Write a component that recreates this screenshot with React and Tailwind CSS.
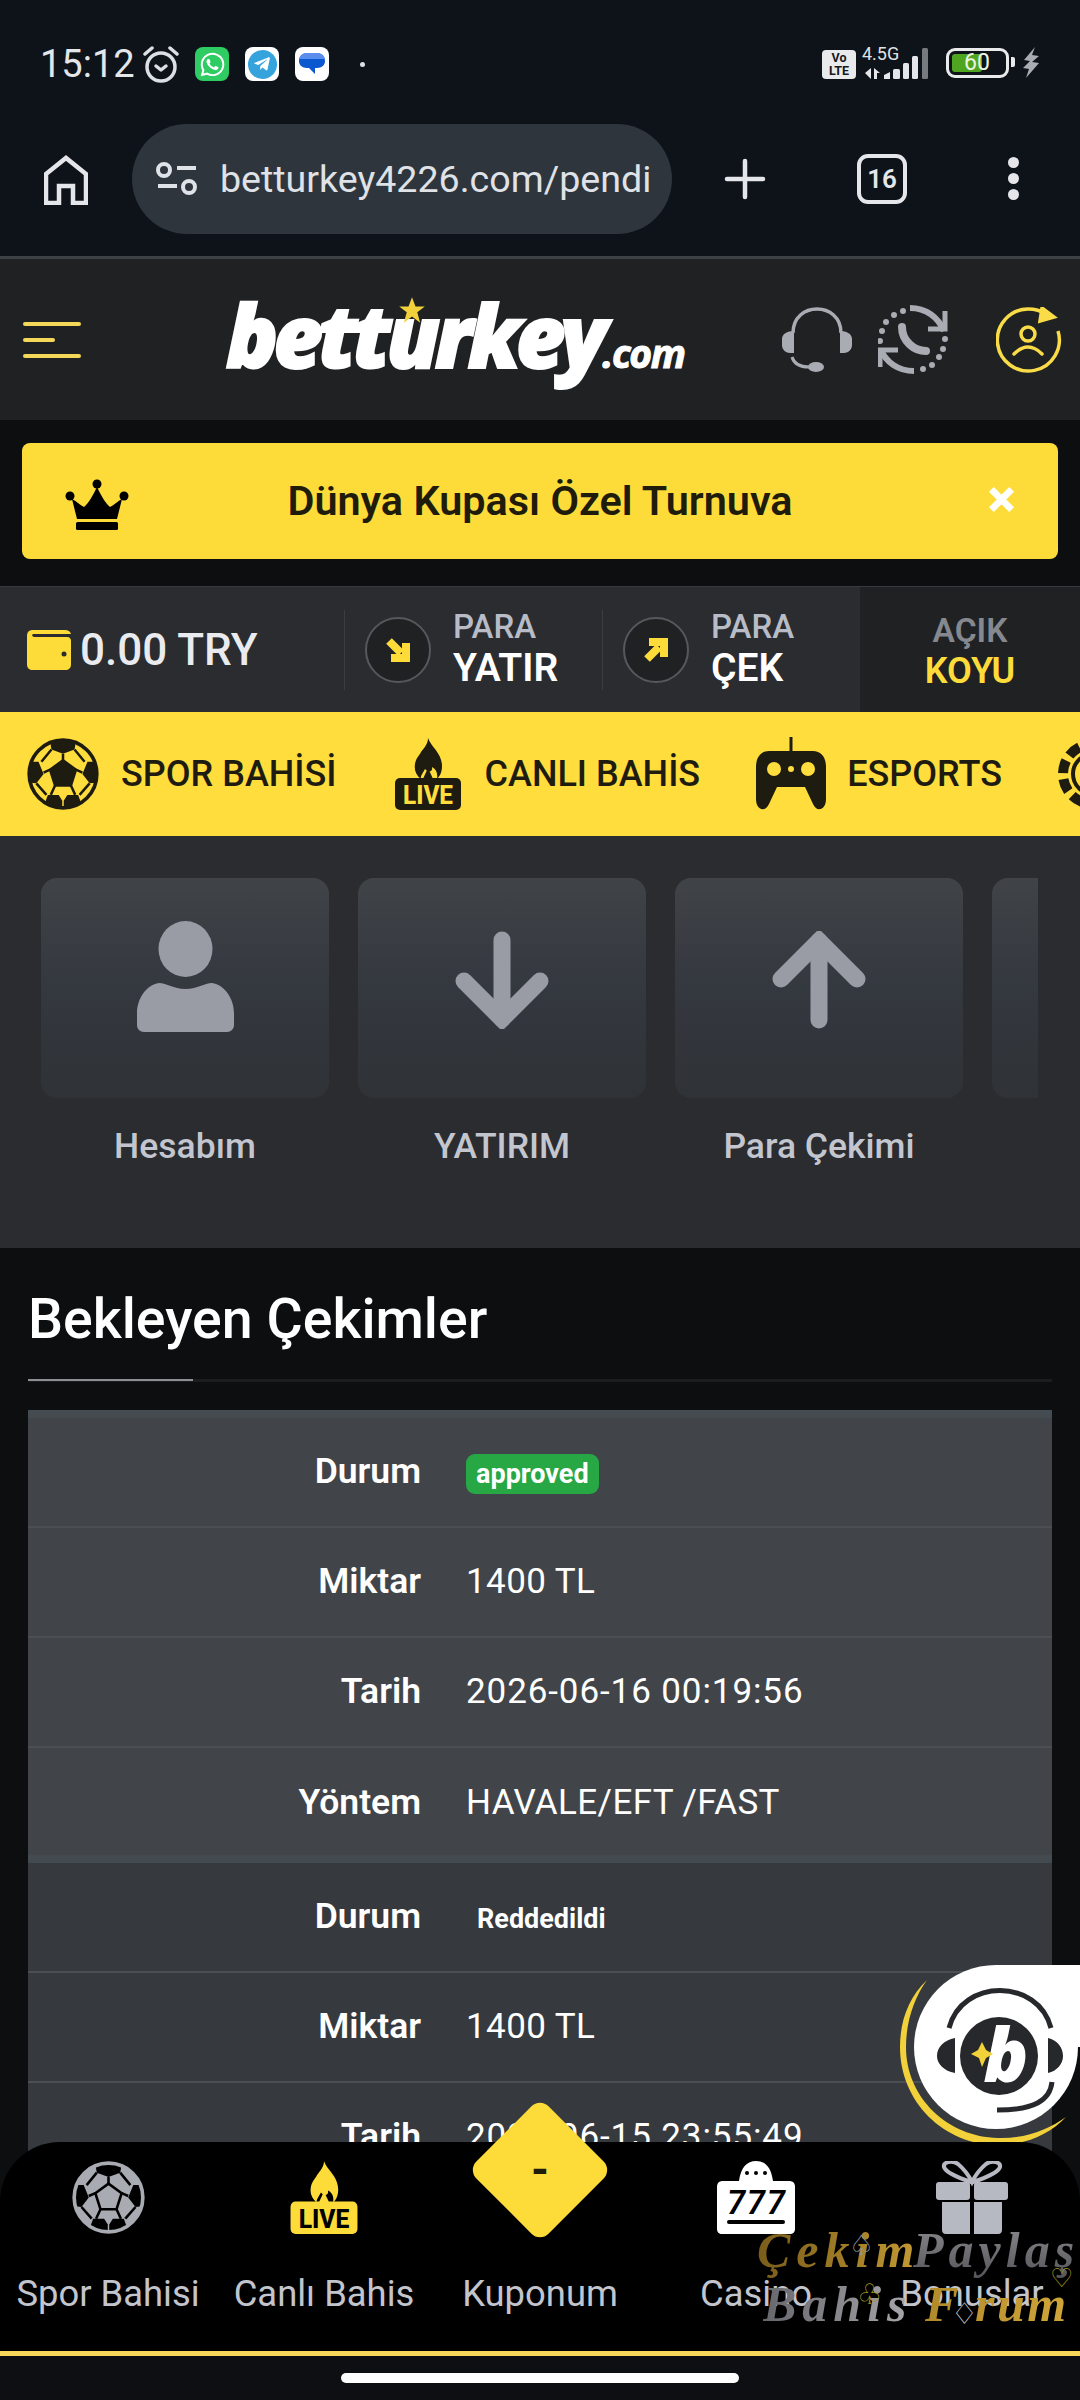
import React from "react";
import { FaWhatsapp, FaTelegramPlane } from "react-icons/fa";

const Ball = ({ size, panel, dark, center, rim }) => (
  <svg width={size} height={size} viewBox="0 0 100 100">
    <circle cx="50" cy="50" r="47" fill={panel} />
    <polygon points="50,31 68,44 61,66 39,66 32,44" fill={center} stroke={dark} strokeWidth="3.5" />
    <g fill={dark}>
      <path d="M32 5 Q50 -1 68 5 L66 16 L50 22 L34 16Z" />
      <path d="M5 33 L16 33 L23 50 L13 63 L4 62 Q0 47 5 33Z" />
      <path d="M95 33 L84 33 L77 50 L87 63 L96 62 Q100 47 95 33Z" />
      <path d="M25 90 L29 79 L44 79 L49 87 L49 98 Q35 98 25 90Z" />
      <path d="M75 90 L71 79 L56 79 L51 87 L51 98 Q65 98 75 90Z" />
    </g>
    <g stroke={dark} strokeWidth="3.5" fill="none">
      <path d="M50 22V31M34 16L20 33M66 16L80 33M32 44L23 48M68 44L77 48M39 66L33 79M61 66L67 79M13 63L27 79M87 63L73 79" />
    </g>
    <circle cx="50" cy="50" r="47" fill="none" stroke={rim} strokeWidth="5" />
  </svg>
);

const Live = ({ w, h, flame, box, ink }) => (
  <svg width={w} height={h} viewBox="0 0 66 72">
    <path d="M33 0 C36 9 47 15 47 28 C47 34 45 38 42 41 C43 35 41 31 37 29 C38 34 33 35 30 31 C28 35 25 38 26 41 C21 37 19 32 20 26 C21 20 24 18 26 14 C29 10 33 6 33 0Z" fill={flame} />
    <path d="M33 30 L39 43 H27Z" fill={flame} />
    <rect x="0" y="40" width="66" height="32" rx="5" fill={box} />
    <text x="33" y="66" textAnchor="middle" fontSize="25" fontWeight="800" fontFamily="Roboto, sans-serif" fill={ink} textLength="50" lengthAdjust="spacingAndGlyphs">LIVE</text>
  </svg>
);

const Gamepad = () => (
  <svg width="72" height="74" viewBox="0 0 72 74">
    <path d="M36 0V16" stroke="#1e1c10" strokeWidth="3" />
    <path fill="#1e1c10" d="M14 14 H58 C66 14 71 20 71 30 V62 C71 73 62 76 58 67 L50 50 H22 L14 67 C10 76 1 73 1 62 V30 C1 20 6 14 14 14Z" />
    <circle cx="19" cy="32" r="7" fill="#ffdd3c" />
    <circle cx="53" cy="32" r="7" fill="#ffdd3c" />
    <circle cx="36" cy="32" r="3" fill="#ffdd3c" />
  </svg>
);

const Chip = () => (
  <svg width="72" height="72" viewBox="0 0 72 72">
    <circle cx="36" cy="36" r="30" fill="none" stroke="#1e1c10" strokeWidth="10" strokeDasharray="13 6" />
    <circle cx="36" cy="36" r="20" fill="none" stroke="#1e1c10" strokeWidth="4" />
  </svg>
);

const CornerArrow = ({ up }) => (
  <svg width="28" height="28" viewBox="0 0 28 28" className={up ? "-scale-y-100" : ""}>
    <path d="M5 5 L17 17" stroke="#fddc3a" strokeWidth="8" />
    <polygon points="26,7 26,26 7,26 7,18 18,18 18,7" fill="#fddc3a" />
  </svg>
);

const Tile = ({ label, children }) => (
  <div className="w-[288px] shrink-0 flex flex-col items-center">
    <div className="w-full h-[220px] rounded-[16px] bg-gradient-to-b from-[#404347] via-[#34383f] to-[#2f3236] flex items-center justify-center">
      {children}
    </div>
    <div className="mt-[28px] text-[35.5px] leading-[40px] font-medium text-[#c3c6cf]">{label}</div>
  </div>
);

const Row = ({ label, children, last, line, wide }) => (
  <div className={`h-[110px] flex items-center ${last ? "" : "border-b-2"} ${line}`}>
    <div className="w-[393px] text-right text-[35.5px] font-semibold text-white">{label}</div>
    <div className={`ml-[45px] text-[35px] text-white ${wide ? "tracking-[0.9px]" : "tracking-[0.4px]"}`}>{children}</div>
  </div>
);

const Badge = ({ children, green }) => (
  <span className={`inline-flex items-center justify-center h-[40px] px-[10px] rounded-[9px] text-[27px] tracking-normal font-bold text-white ${green ? "bg-[#28a745]" : "pl-[11px]"}`}>
    {children}
  </span>
);

const NavItem = ({ label, children }) => (
  <div className="flex flex-col items-center">
    <div className="h-[73px] flex items-end justify-center">{children}</div>
    <div className="mt-[40px] text-[36.4px] leading-[40px] text-[#c3c5cd] whitespace-nowrap">{label}</div>
  </div>
);

const wm = "font-['Liberation_Serif',serif] italic font-bold bg-clip-text text-transparent absolute text-[50px] leading-[56px] whitespace-nowrap";

export default function App() {
  return (
    <div className="relative w-[1080px] h-[2400px] overflow-hidden bg-[#0c0e10] font-['Roboto',sans-serif]">
      {/* system + browser */}
      <div className="bg-[#0e131a] h-[256px]">
        <div className="h-[124px] pt-[46px] pl-[40px] flex items-start">
          <div className="text-[38px] leading-[36px] text-[#e4e6ea] w-[93px]">15:12</div>
          <svg className="ml-[9px]" width="38" height="37" viewBox="0 0 38 37" fill="none" stroke="#dcdfe3" strokeWidth="3.5">
            <circle cx="19" cy="21" r="14" />
            <path d="M3 8 L10 2 M35 8 L28 2" strokeLinecap="round" />
            <path d="M14 20 L19 24 L24 20" strokeLinecap="round" strokeLinejoin="round" />
          </svg>
          <div className="ml-[15px] w-[34px] h-[34px] mt-[1px] rounded-[8px] bg-[#2ecc62] flex items-center justify-center text-white"><FaWhatsapp size={27} /></div>
          <div className="ml-[16px] w-[34px] h-[34px] mt-[1px] rounded-[8px] bg-white flex items-center justify-center">
            <div className="w-[29px] h-[29px] rounded-full bg-[#35a4dd] flex items-center justify-center text-white"><FaTelegramPlane size={18} /></div>
          </div>
          <div className="ml-[16px] w-[34px] h-[34px] mt-[1px] rounded-[8px] bg-white flex items-center justify-center">
            <svg width="26" height="24" viewBox="0 0 26 24">
              <path d="M8 1 H18 C23 1 26 5 26 9 C26 13 23 16 18 16 H16 V22 L10 16 H8 C3 16 0 13 0 9 C0 5 3 1 8 1Z" fill="#0b57d0" />
              <path d="M8 1 H18 C22 1 25 3 26 7 H0 C1 3 4 1 8 1Z" fill="#5b8def" />
            </svg>
          </div>
          <div className="ml-[31px] mt-[16px] w-[5px] h-[5px] rounded-full bg-[#dcdfe3]" />
          <div className="ml-auto flex items-start">
            <div className="mt-[4px] w-[34px] h-[29px] rounded-[4px] bg-[#e8eaec] text-[#15181c] text-[12.5px] leading-[12.5px] font-bold text-center flex flex-col justify-center">
              <span>Vo</span><span>LTE</span>
            </div>
            <div className="relative ml-[6px] w-[70px] h-[34px]">
              <span className="absolute left-0 top-[-2px] text-[18px] leading-[20px] text-[#dfe2e5]">4.5G</span>
              <svg className="absolute left-0 top-0" width="72" height="34" viewBox="0 0 72 34">
                <path d="M3 27 L9 22 V33 Z M12 22 L18 27 H15 V33 H12Z" fill="#e4e6ea" />
                <path d="M22 33 V29 L28 26 V33Z" fill="#e4e6ea" />
                <rect x="31" y="23" width="7" height="10" rx="1.5" fill="#e4e6ea" />
                <rect x="41" y="17" width="6" height="16" rx="1.5" fill="#e4e6ea" />
                <rect x="50" y="10" width="6" height="23" rx="1.5" fill="#e4e6ea" />
                <rect x="60" y="2" width="6" height="31" rx="1.5" fill="#777b80" />
              </svg>
            </div>
            <div className="relative ml-[14px] mt-[2px] w-[63px] h-[30px] rounded-[9px] border-[3px] border-[#e8eaec] p-[3px]">
              <div className="w-[30px] h-full rounded-[3px] bg-[#4fa51f]" />
              <span className="absolute left-[15px] top-[0px] text-[23px] leading-[24px] text-[#eaf5e2]">60</span>
            </div>
            <div className="ml-[2px] mt-[11px] w-[4px] h-[10px] rounded-r-[2px] bg-[#e8eaec]" />
            <svg className="ml-[7px] mt-[1px] mr-[40px]" width="18" height="31" viewBox="0 0 18 31">
              <path d="M13 0 L2 13 L8 14 L1 21 L7 22 L4 31 L17 16 L10 15 L17 9 L10 8Z" fill="#a9adb2" />
            </svg>
          </div>
        </div>
        <div className="h-[132px] pl-[44px] flex items-start">
          <svg className="mt-[31px]" width="44" height="50" viewBox="0 0 44 50" fill="none" stroke="#e4e6ea" strokeWidth="4.5">
            <path d="M2 48 V19 L22 3 L42 19 V48 H29 V31 H15 V48Z" />
          </svg>
          <div className="ml-[44px] w-[540px] h-[110px] rounded-[55px] bg-[#2f353d] flex items-center pl-[24px] overflow-hidden">
            <svg width="42" height="34" viewBox="0 0 42 34" fill="none" stroke="#dfe2e6" strokeWidth="4">
              <circle cx="8" cy="8" r="6" />
              <path d="M21 6 H40 M2 24 H21" />
              <circle cx="33" cy="25" r="6" />
            </svg>
            <span className="ml-[22px] text-[37.6px] text-[#dfe2e6] whitespace-nowrap">betturkey4226.com/pendi</span>
          </div>
          <svg className="ml-[52px] mt-[34px]" width="42" height="42" viewBox="0 0 42 42" stroke="#e4e6ea" strokeWidth="4.5" strokeLinecap="round">
            <path d="M21 3 V39 M3 21 H39" />
          </svg>
          <div className="ml-[91px] mt-[30px] w-[50px] h-[50px] rounded-[11px] border-[4.5px] border-[#e4e6ea] flex items-center justify-center text-[26px] font-semibold text-[#e4e6ea]">16</div>
          <div className="ml-[101px] mt-[33px] flex flex-col gap-[5px]">
            <div className="w-[11px] h-[11px] rounded-full bg-[#e4e6ea]" />
            <div className="w-[11px] h-[11px] rounded-full bg-[#e4e6ea]" />
            <div className="w-[11px] h-[11px] rounded-full bg-[#e4e6ea]" />
          </div>
        </div>
      </div>

      {/* site header */}
      <div className="h-[164px] bg-[#1f2123] border-t-[3px] border-[#3e4144] flex items-center pl-[23px]">
        <div className="w-[58px] flex flex-col gap-[12px]">
          <div className="h-[4px] rounded bg-[#f5d85a]" />
          <div className="h-[4px] w-[32px] rounded bg-[#f5d85a]" />
          <div className="h-[4px] rounded bg-[#f5d85a]" />
        </div>
        <div className="relative ml-[145px] -mt-[10px] w-[462px] h-[100px] font-['Open_Sans',sans-serif] italic text-white flex items-baseline">
          <span className="text-[86px] leading-[100px] font-extrabold tracking-[-5px] [-webkit-text-stroke:2px_white]">betturkey</span>
          <span className="text-[39px] font-bold tracking-[-1.5px] [-webkit-text-stroke:1px_white]">.com</span>
          <svg className="absolute left-[172px] top-[11px]" width="28" height="28" viewBox="0 0 24 24">
            <polygon points="12,1 15,9 23,9 16.5,14 19,23 12,17.5 5,23 7.5,14 1,9 9,9" fill="#f2d13a" />
          </svg>
        </div>
        <svg className="ml-[94px]" width="70" height="66" viewBox="0 0 70 66" fill="none">
          <path d="M11 26 C11 -6 59 -6 59 26" stroke="#a9acb3" strokeWidth="3.5" />
          <path d="M12 24 V46 H8 C3 46 0 42 0 38 V32 C0 27 5 24 12 24Z M58 24 V46 H62 C67 46 70 42 70 38 V32 C70 27 65 24 58 24Z" fill="#a9acb3" />
          <path d="M10 50 C12 57 18 60 27 60" stroke="#a9acb3" strokeWidth="3" />
          <ellipse cx="34" cy="60" rx="8" ry="5" fill="#a9acb3" />
        </svg>
        <svg className="ml-[26px]" width="70" height="70" viewBox="0 0 70 70" fill="none" stroke="#a9acb3">
          <path d="M32 3 C48 3 60 12 66 26" strokeWidth="6" />
          <path d="M67 6 V24 H50" strokeWidth="5" />
          <path d="M36 66 C20 66 8 57 3 45" strokeWidth="6" />
          <path d="M2 64 V47 H20" strokeWidth="5" transform="translate(0,-2)" />
          <path d="M24 22 C24 36 36 46 48 46" strokeWidth="8" strokeLinecap="round" />
          <g fill="#a9acb3" stroke="none">
            <circle cx="25" cy="6" r="3" /><circle cx="16" cy="10" r="3" /><circle cx="8" cy="17" r="3" /><circle cx="4" cy="26" r="3" /><circle cx="2" cy="36" r="3" />
            <circle cx="45" cy="64" r="3" /><circle cx="54" cy="60" r="3" /><circle cx="61" cy="52" r="3" /><circle cx="65" cy="44" r="3" /><circle cx="67" cy="34" r="3" />
          </g>
        </svg>
        <svg className="ml-[48px]" width="66" height="66" viewBox="0 0 66 66" fill="none" stroke="#f9dc48" strokeWidth="3.5">
          <path d="M50 7 C44 3 38 2 32 2 A31 31 0 1 0 62 24" />
          <polygon points="46,1 58,10 44,14" fill="#f9dc48" />
          <circle cx="32" cy="27" r="7" />
          <path d="M18 47 Q32 33 46 47" strokeLinecap="round" />
        </svg>
      </div>

      {/* notice */}
      <div className="h-[166px] px-[22px] pt-[23px]">
        <div className="relative h-[116px] rounded-[8px] bg-[#fddc3a] flex items-center justify-center">
          <svg className="absolute left-[43px] top-[36px]" width="64" height="52" viewBox="0 0 64 52">
            <circle cx="32" cy="5" r="4.5" /><circle cx="5" cy="17" r="4.5" /><circle cx="59" cy="17" r="4.5" />
            <path d="M32 8 C36 16 40 24 45 28 C49 26 53 22 57 20 L52 40 H12 L7 20 C11 22 15 26 19 28 C24 24 28 16 32 8Z" />
            <rect x="11" y="43" width="42" height="8" rx="1.5" />
          </svg>
          <span className="text-[41.4px] font-semibold text-[#1f1c0c]">Dünya Kupası Özel Turnuva</span>
          <svg className="absolute left-[966px] top-[43px]" width="27" height="27" viewBox="0 0 24 24" stroke="#fff" strokeWidth="6">
            <path d="M3 3 L21 21 M21 3 L3 21" />
          </svg>
        </div>
      </div>

      {/* account bar */}
      <div className="h-[126px] bg-[#2a2c30] border-t border-[#37393d] flex items-center">
        <div className="w-[344px] pl-[27px] flex items-center">
          <svg width="44" height="40" viewBox="0 0 44 40">
            <path d="M6 0 H38 C41 0 43 1 44 4 H7 C5 4 4 6 7 7 H40 C43 7 44 9 44 11 V34 C44 38 42 40 38 40 H6 C2 40 0 38 0 34 V6 C0 2 2 0 6 0Z" fill="#fddc3a" />
            <circle cx="37" cy="24" r="2.5" fill="#2a2c30" />
          </svg>
          <span className="ml-[9px] text-[44px] font-medium text-[#e9ebef] whitespace-nowrap">0.00 TRY</span>
        </div>
        <div className="w-[258px] h-[80px] border-l border-[#3b3d41] flex items-center pl-[20px]">
          <div className="w-[66px] h-[66px] rounded-full border-2 border-[#55585c] bg-[#1f2123] flex items-center justify-center"><CornerArrow /></div>
          <div className="ml-[22px] -mt-[3px] flex flex-col">
            <span className="text-[33px] leading-[40px] font-medium text-[#b8bcc6]">PARA</span>
            <span className="text-[39px] leading-[42px] font-semibold text-white">YATIR</span>
          </div>
        </div>
        <div className="w-[258px] h-[80px] border-l border-[#3b3d41] flex items-center pl-[20px]">
          <div className="w-[66px] h-[66px] rounded-full border-2 border-[#55585c] bg-[#1f2123] flex items-center justify-center"><CornerArrow up /></div>
          <div className="ml-[22px] -mt-[3px] flex flex-col">
            <span className="text-[33px] leading-[40px] font-medium text-[#b8bcc6]">PARA</span>
            <span className="text-[39px] leading-[42px] font-semibold text-white">ÇEK</span>
          </div>
        </div>
        <div className="flex-1 h-full bg-[#1f2123] flex flex-col items-center justify-center pt-[2px]">
          <span className="text-[33.5px] leading-[41px] font-semibold text-[#85888e]">AÇIK</span>
          <span className="text-[36px] leading-[41px] font-semibold text-[#fddc3a]">KOYU</span>
        </div>
      </div>

      {/* yellow nav */}
      <div className="h-[124px] bg-[#ffdd3c] flex items-center pl-[27px] overflow-hidden text-[36px] font-medium text-[#1e1c10] whitespace-nowrap">
        <div className="flex items-center gap-[22px] shrink-0">
          <Ball size={72} panel="#ffdd3c" dark="#1e1c10" center="#1e1c10" rim="#1e1c10" />
          <span>SPOR BAHİSİ</span>
        </div>
        <div className="ml-[58px] flex items-center gap-[24px] shrink-0">
          <Live w={66} h={72} flame="#1e1c10" box="#1e1c10" ink="#ffdd3c" />
          <span>CANLI BAHİS</span>
        </div>
        <div className="ml-[55px] flex items-center gap-[20px] shrink-0">
          <Gamepad />
          <span>ESPORTS</span>
        </div>
        <div className="ml-[55px] shrink-0"><Chip /></div>
      </div>

      {/* tiles */}
      <div className="h-[412px] bg-[#2a2c30] pt-[42px] pl-[41px]">
        <div className="w-[997px] overflow-hidden flex gap-[29px]">
          <Tile label="Hesabım">
            <svg className="-mt-[24px]" width="97" height="111" viewBox="0 0 97 111" fill="#999ba5">
              <ellipse cx="48.5" cy="28" rx="27" ry="28" />
              <path d="M22 62 C30 62 36 68 48.5 68 C61 68 67 62 75 62 C88 64 97 78 97 92 V104 C97 108 94 111 90 111 H7 C3 111 0 108 0 104 V92 C0 78 9 64 22 62Z" />
            </svg>
          </Tile>
          <Tile label="YATIRIM">
            <svg className="-mt-[16px]" width="94" height="98" viewBox="0 0 94 98" fill="none" stroke="#999ba5" strokeWidth="17" strokeLinecap="round" strokeLinejoin="miter">
              <path d="M47 9 V88" />
              <path d="M9 50 L47 88 L85 50" strokeLinecap="round" />
            </svg>
          </Tile>
          <Tile label="Para Çekimi">
            <svg className="-mt-[16px]" width="94" height="98" viewBox="0 0 94 98" fill="none" stroke="#999ba5" strokeWidth="17" strokeLinecap="round" strokeLinejoin="miter">
              <path d="M47 89 V10" />
              <path d="M9 48 L47 10 L85 48" strokeLinecap="round" />
            </svg>
          </Tile>
          <Tile label="" />
        </div>
      </div>

      {/* content */}
      <div className="px-[28px]">
        <h1 className="h-[131px] pt-[41px] text-[55.5px] leading-[62px] font-medium text-white">Bekleyen Çekimler</h1>
        <div className="h-[3px] bg-[#1b1d1f]"><div className="w-[165px] h-[2px] bg-[#8c8e92]" /></div>
        <div className="mt-[28px] bg-[#414549] border-t-[8px] border-[#454c51]">
          <Row line="border-[#4b4f53]" label="Durum"><Badge green>approved</Badge></Row>
          <Row line="border-[#4b4f53]" label="Miktar">1400 TL</Row>
          <Row wide line="border-[#4b4f53]" label="Tarih">2026-06-16 00:19:56</Row>
          <Row last label="Yöntem">HAVALE/EFT /FAST</Row>
        </div>
        <div className="bg-[#363a3f] border-t-[8px] border-[#434a50] -mt-[3px]">
          <Row line="border-[#4b4f53]" label="Durum"><Badge>Reddedildi</Badge></Row>
          <Row line="border-[#4b4f53]" label="Miktar">1400 TL</Row>
          <Row wide line="border-[#4b4f53]" label="Tarih">2026-06-15 23:55:49</Row>
          <Row last label="Yöntem">HAVALE/EFT /FAST</Row>
        </div>
      </div>

      {/* floating support widget */}
      <svg className="absolute left-[895px] top-[1960px]" width="185" height="190" viewBox="895 1960 185 190">
        <path d="M927 1980 C908 1998 900 2022 900 2047 C900 2102 944 2145 998 2145 C1026 2145 1050 2134 1066 2117 C1048 2130 1024 2139 998 2138 C948 2137 906 2098 906 2047 C906 2022 914 1998 927 1980Z" fill="#f2d13a" />
        <circle cx="996" cy="2047" r="82" fill="#fff" />
        <rect x="996" y="1965" width="84" height="82" fill="#fff" />
        <circle cx="999" cy="2056" r="39" fill="#26282b" />
        <path d="M949 2028 C962 1978 1038 1978 1051 2028" fill="none" stroke="#26282b" strokeWidth="5" />
        <path d="M955 2038 C944 2040 937 2047 937 2056 C937 2064 944 2071 955 2073Z M1048 2038 C1057 2040 1063 2047 1063 2056 C1063 2064 1057 2071 1048 2073Z" fill="#26282b" />
        <path d="M1052 2082 C1050 2100 1035 2110 997 2110" fill="none" stroke="#26282b" strokeWidth="5" />
        <text x="1006" y="2082" textAnchor="middle" fontSize="74" fontWeight="800" fontStyle="italic" fontFamily="'Open Sans', sans-serif" fill="#fff">b</text>
        <polygon points="982,2042 986,2050 993,2054 986,2058 982,2067 979,2058 971,2054 978,2050" fill="#f2d13a" />
      </svg>

      {/* bottom bar */}
      <div className="absolute left-0 top-[2102px] w-full h-[298px]">
        <div className="absolute left-0 right-0 top-[40px] h-[209px] bg-black rounded-t-[60px] pt-[19px] grid grid-cols-5">
          <NavItem label="Spor Bahisi"><Ball size={73} panel="#a9abb2" dark="#000" center="#a9abb2" rim="#a9abb2" /></NavItem>
          <NavItem label="Canlı Bahis"><Live w={68} h={73} flame="#fddc3a" box="#fddc3a" ink="#000" /></NavItem>
          <NavItem label="Kuponum"><span /></NavItem>
          <NavItem label="Casino">
            <svg width="78" height="73" viewBox="0 0 78 73">
              <path d="M22 20 C24 6 30 0 39 0 C48 0 54 6 56 20 H72 C76 20 78 22 78 26 V68 C78 71 76 73 73 73 H5 C2 73 0 71 0 68 V26 C0 22 2 20 6 20Z" fill="#fff" />
              <circle cx="30" cy="12" r="2" /><circle cx="39" cy="12" r="2" /><circle cx="48" cy="12" r="2" />
              <text x="39" y="53" textAnchor="middle" fontSize="33" fontWeight="600" fontStyle="italic" fontFamily="Roboto, sans-serif" textLength="58" fill="#000">777</text>
              <rect x="10" y="59" width="58" height="4" rx="2" />
            </svg>
          </NavItem>
          <NavItem label="Bonuslar">
            <svg width="72" height="73" viewBox="0 0 72 73">
              <path d="M35 21 C26 18 10 12 8 6 C7 1 16 -1 22 3 C28 8 33 15 36 21 C39 15 44 8 50 3 C56 -1 65 1 64 6 C62 12 46 18 37 21" fill="none" stroke="#b6b8c2" strokeWidth="4" />
              <rect x="0" y="21" width="34" height="18" rx="3" fill="#b6b8c2" />
              <rect x="38" y="21" width="34" height="18" rx="3" fill="#b6b8c2" />
              <path d="M6 41 H34 V73 H10 C7 73 6 71 6 69Z M38 41 H66 V69 C66 71 65 73 62 73 H38Z" fill="#b6b8c2" />
            </svg>
          </NavItem>
        </div>
        <div className="absolute left-[489px] top-[17px] w-[102px] h-[102px] rotate-45 rounded-[12px] bg-[#fddc3a]" />
        <span className="absolute left-0 w-full text-center top-[46px] text-[44px] leading-[44px] font-extrabold text-[#1f1c0c]">-</span>
        <div className="absolute left-0 right-0 top-[249px] h-[49px] bg-[#0d0f12] border-t-[5px] border-[#f5d85a]">
          <div className="mt-[17px] mx-auto w-[398px] h-[10px] rounded-full bg-white" />
        </div>
      </div>

      {/* watermark */}
      <span className={`${wm} tracking-[6px] left-[757px] top-[2222px] bg-gradient-to-r from-[#7a5c1a] to-[#c49a34]`}>Çekim</span>
      <span className={`${wm} tracking-[5px] left-[913px] top-[2222px] bg-gradient-to-b from-[#8c8c90] to-[#55565a]`}>Paylaş</span>
      <span className={`${wm} tracking-[6px] left-[763px] top-[2276px] bg-gradient-to-r from-[#66676c] to-[#a9a9ad]`}>Bahis</span>
      <span className={`${wm} tracking-[2.5px] left-[925px] top-[2276px] bg-gradient-to-r from-[#b08a2a] to-[#d0a63a]`}>F rum</span>
      <span className="absolute left-[849px] top-[2229px] text-[28px] leading-[34px] text-[#8a9aa0] font-['DejaVu_Sans',sans-serif]">♤</span>
      <span className="absolute left-[857px] top-[2278px] text-[28px] leading-[34px] text-[#a39a1e] font-['DejaVu_Sans',sans-serif]">♧</span>
      <span className="absolute left-[951px] top-[2296px] text-[30px] leading-[36px] text-[#c8c8cc] font-['DejaVu_Sans',sans-serif]">♢</span>
      <span className="absolute left-[1050px] top-[2262px] text-[26px] leading-[32px] text-[#a39a1e] font-['DejaVu_Sans',sans-serif]">♡</span>
    </div>
  );
}
